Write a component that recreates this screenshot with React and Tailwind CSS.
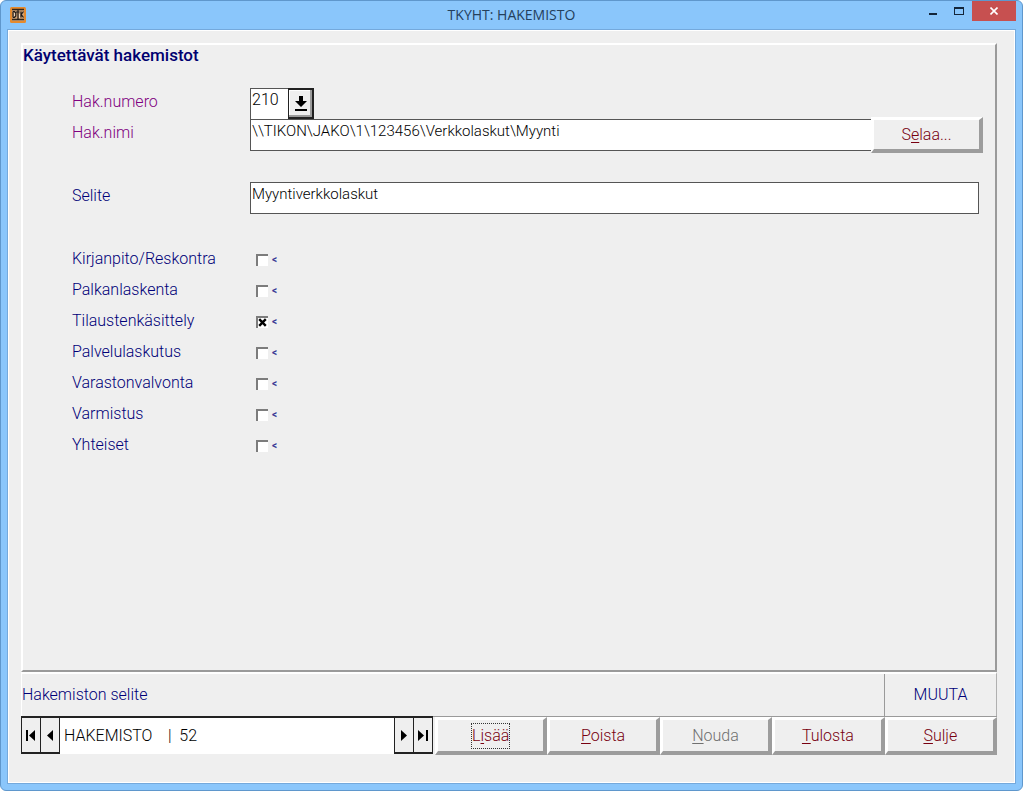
import React from "react";

const modules = [
  { id: "kirjanpito", label: "Kirjanpito/Reskontra", checked: false },
  { id: "palkanlaskenta", label: "Palkanlaskenta", checked: false },
  { id: "tilaustenkasittely", label: "Tilaustenkäsittely", checked: true },
  { id: "palvelulaskutus", label: "Palvelulaskutus", checked: false },
  { id: "varastonvalvonta", label: "Varastonvalvonta", checked: false },
  { id: "varmistus", label: "Varmistus", checked: false },
  { id: "yhteiset", label: "Yhteiset", checked: false },
];

const raised =
  "border-t-[3px] border-l-[3px] border-r-4 border-b-4 border-t-white border-l-white border-r-[#9c9c9c] border-b-[#9c9c9c] bg-[#efefef]";

function AppIcon() {
  return (
    <svg width="16" height="16" viewBox="0 0 16 16" aria-hidden="true">
      <rect width="16" height="16" rx="1.5" fill="#e58a2e" />
      <rect x="2" y="2" width="12" height="12" fill="#cfa276" />
      <path d="M2 2.5h12M2 12.5h12" stroke="#33271c" strokeWidth="1.4" />
      <path
        d="M3 4.5v6M3 4.5h1.5l1.3 1.5v3l-1.3 1.5H3M8 3v10M6 5h3.5M11 4.5v6M13.5 4.5L11.2 7.5l2.3 3"
        fill="none"
        stroke="#1d1a1a"
        strokeWidth="1.2"
      />
      <path d="M4.5 6v3M9.5 7v4" stroke="#f1e2d0" strokeWidth="0.8" />
    </svg>
  );
}

function TitleBar() {
  return (
    <header className="grid h-7 grid-cols-[1fr_auto_1fr] items-start">
      <div className="pt-1.5 pl-[3px]">
        <AppIcon />
      </div>
      <h1 className="pt-1 font-['Open_Sans',sans-serif] text-[14px] leading-5 font-normal text-[#24405c]">
        TKYHT: HAKEMISTO
      </h1>
      <div className="flex justify-end">
        <button type="button" aria-label="Pienennä" className="flex h-5 w-[26px] items-start justify-center pt-3">
          <svg width="8" height="2" viewBox="0 0 8 2">
            <rect width="8" height="2" fill="#14263a" />
          </svg>
        </button>
        <button type="button" aria-label="Suurenna" className="flex h-5 w-[26px] items-start justify-center pt-1.5">
          <svg width="10" height="8" viewBox="0 0 10 8">
            <rect x="0.5" y="0.5" width="9" height="7" fill="none" stroke="#14263a" />
            <rect width="10" height="2" fill="#14263a" />
          </svg>
        </button>
        <button type="button" aria-label="Sulje ikkuna" className="flex h-5 w-11 items-center justify-center bg-[#c75050]">
          <svg width="8" height="8" viewBox="0 0 8 8">
            <path d="M0.5 0.5l7 7M7.5 0.5l-7 7" stroke="#fff" strokeWidth="1.6" />
          </svg>
        </button>
      </div>
    </header>
  );
}

function Row({ id, label, className = "text-[#000078]", children }) {
  return (
    <div className="flex h-[31px] items-start">
      <label htmlFor={id} className={`w-[178px] shrink-0 leading-7 ${className}`}>
        {label}
      </label>
      {children}
    </div>
  );
}

function DirectoryNumber() {
  return (
    <div className="relative h-8 w-16">
      <select
        id="numero"
        defaultValue="210"
        className="h-8 w-full appearance-none border border-[#555] bg-white pb-2 pl-px leading-[22px] text-black"
      >
        <option>210</option>
      </select>
      <span className="pointer-events-none absolute top-0 right-0 flex h-[31px] w-[26px] items-center justify-center border-2 border-l border-[#222] bg-[#efefef] shadow-[inset_-2px_-2px_0_#9c9c9c,inset_1px_1px_0_#fff]">
        <svg width="12" height="15" viewBox="0 0 12 15" aria-hidden="true">
          <path d="M4 0h4v5h4l-6 6-6-6h4z" fill="#000" />
          <rect y="13" width="12" height="2" fill="#000" />
        </svg>
      </span>
    </div>
  );
}

function ModuleCheck({ id, checked }) {
  return (
    <div className="flex h-[29px] items-center pl-1.5">
      <span className="grid">
        <input
          id={id}
          type="checkbox"
          defaultChecked={checked}
          className="peer col-start-1 row-start-1 size-3 appearance-none border-t-2 border-l-2 border-[#7c7c7c] bg-white"
        />
        <svg
          viewBox="0 0 12 12"
          className="pointer-events-none invisible col-start-1 row-start-1 size-3 peer-checked:visible"
          aria-hidden="true"
        >
          <path d="M3.2 3.2l6.6 6.6M9.8 3.2l-6.6 6.6" stroke="#000" strokeWidth="2.4" />
        </svg>
      </span>
      <span className="pl-1 text-[10px] leading-3 font-bold text-[#3a3a96]">&lt;</span>
    </div>
  );
}

function NavButton({ label, path }) {
  return (
    <button
      type="button"
      aria-label={label}
      className="-ml-px flex w-5 shrink-0 items-center justify-center border border-t-2 border-b-2 border-[#222] bg-[#efefef] first:ml-0"
    >
      <svg width="10" height="11" viewBox="0 0 10 11">
        <path d={path} fill="#000" />
      </svg>
    </button>
  );
}

function ActionButton({ before = "", hot, after, disabled, focused }) {
  return (
    <button
      type="button"
      disabled={disabled}
      className={`flex flex-1 items-center justify-center ${raised} ${disabled ? "text-[#707070]" : "text-[#780010]"}`}
    >
      <span className={focused ? "outline-1 outline-dotted outline-[#333]" : ""}>
        {before}
        <u className="underline-offset-2">{hot}</u>
        {after}
      </span>
    </button>
  );
}

export default function App() {
  return (
    <div className="flex min-h-screen flex-col rounded-md border border-[#5f97cc] bg-[#8ac6fb] px-1.5 pb-1.5 font-[Roboto,sans-serif] text-[16px] font-light">
      <TitleBar />
      <main className="flex flex-1 flex-col border border-[#74a9dc] bg-[#efefef] pt-[13px] pr-[18px] pb-7 pl-[13px] shadow-[inset_1px_1px_0_#fff,inset_-1px_-1px_0_#fff]">
        <section className="flex-1 border-2 border-t-white border-r-[#9a9a9a] border-b-[#9a9a9a] border-l-white pr-3">
          <h2 className="text-[17px] leading-5 font-medium text-[#000070]">Käytettävät hakemistot</h2>
          <form className="pt-[23px] pl-[49px]">
            <Row id="numero" label="Hak.numero" className="text-[#800080]">
              <DirectoryNumber />
            </Row>
            <Row id="nimi" label="Hak.nimi" className="text-[#800080]">
              <div className="flex h-8 flex-1 items-center">
                <input
                  id="nimi"
                  defaultValue="\\TIKON\JAKO\1\123456\Verkkolaskut\Myynti"
                  className="h-8 min-w-0 flex-1 border border-r-0 border-[#555] bg-white pb-2 pl-px text-[15px] text-black"
                />
                <button type="button" className={`h-9 w-28 shrink-0 text-[#780010] ${raised}`}>
                  S<u className="underline-offset-2">e</u>laa...
                </button>
              </div>
            </Row>
            <div className="pt-8 pr-1">
              <Row id="selite" label="Selite">
                <input
                  id="selite"
                  defaultValue="Myyntiverkkolaskut"
                  className="h-8 min-w-0 flex-1 border border-[#555] bg-white pb-2 pl-px text-[15px] text-black"
                />
              </Row>
            </div>
            <div className="pt-8">
              {modules.map((m) => (
                <Row key={m.id} id={m.id} label={m.label}>
                  <ModuleCheck id={m.id} checked={m.checked} />
                </Row>
              ))}
            </div>
          </form>
        </section>
        <div className="flex h-11 items-stretch border-t-2 border-r border-l border-t-white border-r-[#b0b0b0] border-l-white text-[#000078]">
          <p className="flex-1 leading-[42px]">Hakemiston selite</p>
          <p className="w-28 border-l border-[#9a9a9a] text-center leading-[42px]">MUUTA</p>
        </div>
        <footer className="flex h-[39px]">
          <nav className="flex h-[38px] min-w-0 flex-1" aria-label="Selaus">
            <NavButton label="Ensimmäinen" path="M0 0h2v11H0zM9 0v11L3 5.500z" />
            <NavButton label="Edellinen" path="M8 0v11L2 5.500z" />
            <input
              aria-label="Taulu"
              readOnly
              value="HAKEMISTO    |  52"
              className="min-w-0 flex-1 border-t-2 border-[#222] bg-white pl-1 text-black"
            />
            <NavButton label="Seuraava" path="M2 0v11L8 5.500z" />
            <NavButton label="Viimeinen" path="M0 0v11L6 5.500zM8 0h2v11H8z" />
          </nav>
          <div className="flex w-[564px] border-t border-[#9a9a9a] pl-0.5">
            <ActionButton before="L" hot="i" after="sää" focused />
            <ActionButton hot="P" after="oista" />
            <ActionButton hot="N" after="ouda" disabled />
            <ActionButton hot="T" after="ulosta" />
            <ActionButton hot="S" after="ulje" />
          </div>
        </footer>
      </main>
    </div>
  );
}
